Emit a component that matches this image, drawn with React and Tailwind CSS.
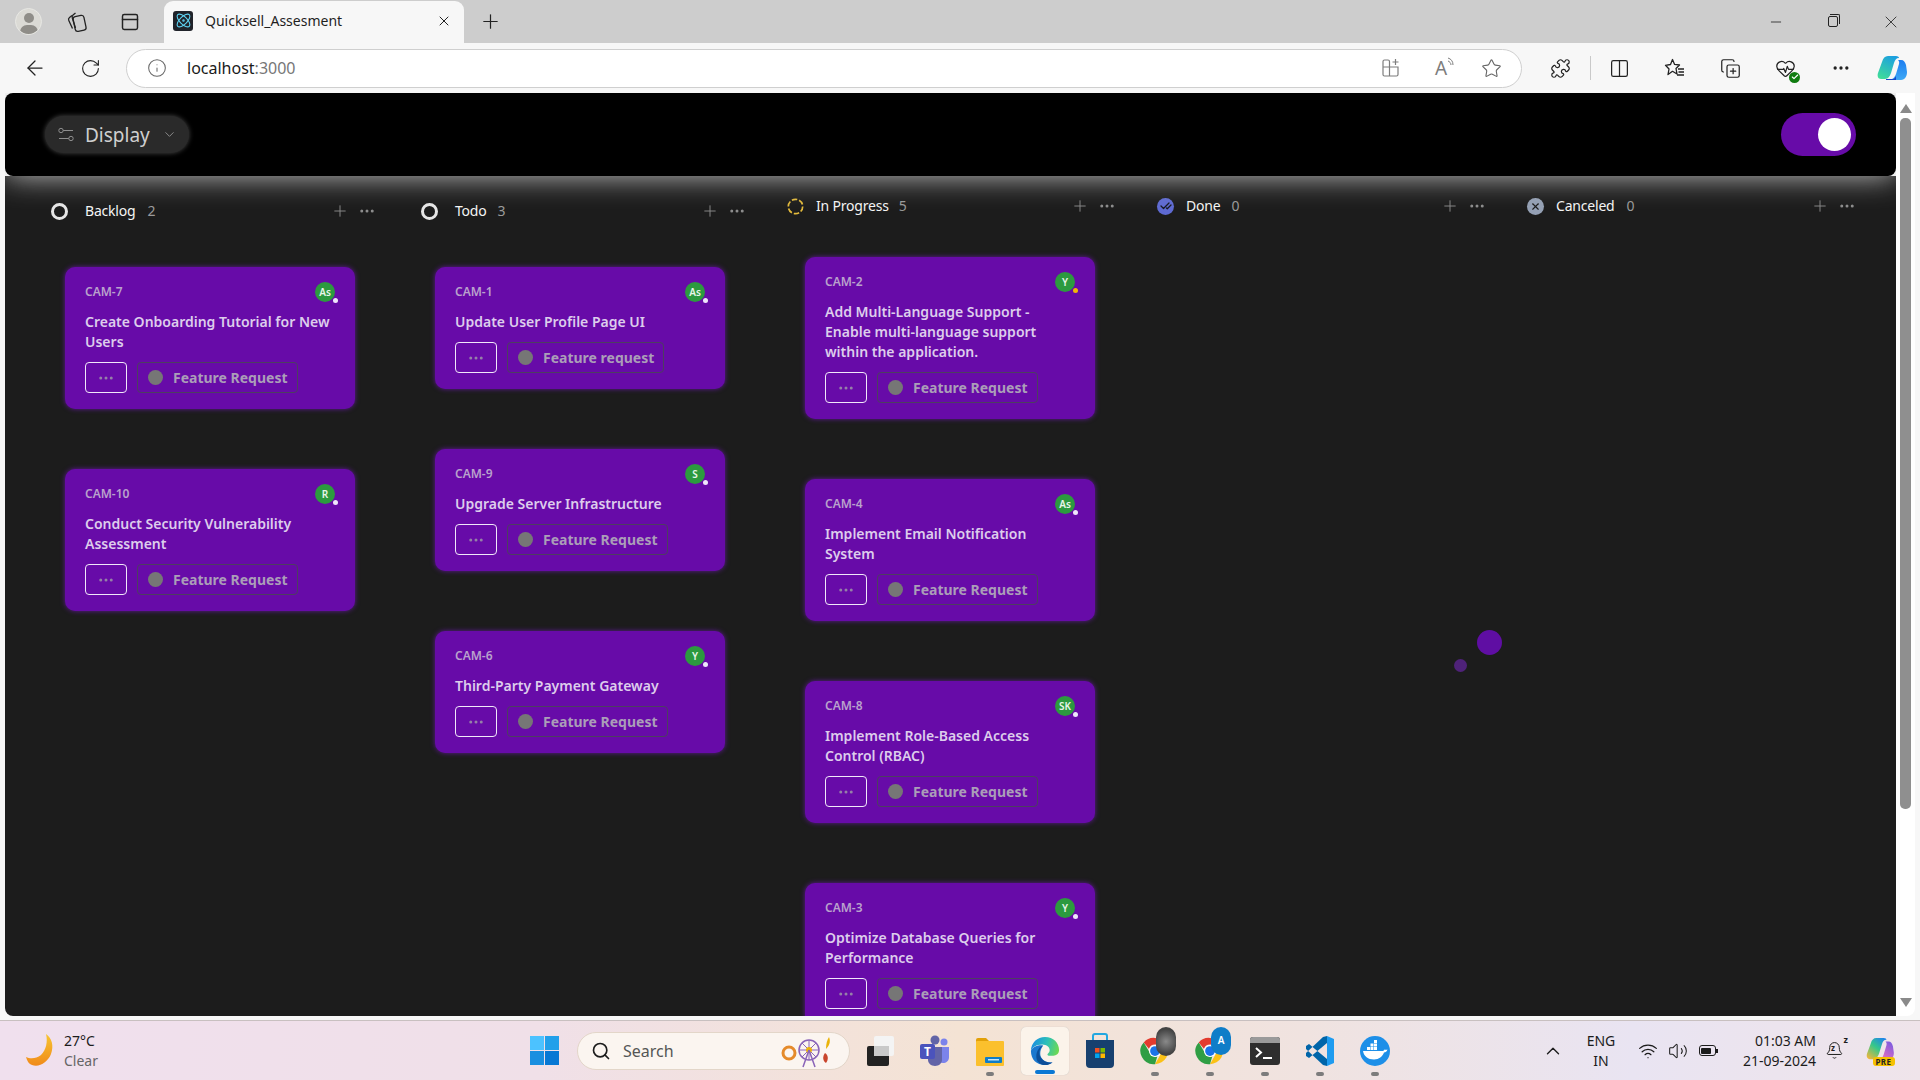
import { ArrowLeft, Atom, Bell, ChevronDown, ChevronUp, Columns2, CopyPlus, HeartPulse, Info, Minus, MoreHorizontal, PanelTop, Plus, Puzzle, RotateCw, Search, Star, Volume2, Wifi, X, Check, CheckCheck } from 'lucide-react';

const columns = [
  {
    name: 'Backlog', count: 2, icon: 'ring', header: 'pt-[25px] mb-[46px] pl-[21px]', textGap: 'ml-[17px]', countGap: 'ml-[12px]',
    cards: [
      { id: 'CAM-7', title: 'Create Onboarding Tutorial for New Users', user: 'As', tag: 'Feature Request' },
      { id: 'CAM-10', title: 'Conduct Security Vulnerability Assessment', user: 'R', tag: 'Feature Request' },
    ],
  },
  {
    name: 'Todo', count: 3, icon: 'ring', header: 'pt-[25px] mb-[46px] pl-[21px]', textGap: 'ml-[17px]', countGap: 'ml-[11px]',
    cards: [
      { id: 'CAM-1', title: 'Update User Profile Page UI', user: 'As', tag: 'Feature request' },
      { id: 'CAM-9', title: 'Upgrade Server Infrastructure', user: 'S', tag: 'Feature Request' },
      { id: 'CAM-6', title: 'Third-Party Payment Gateway', user: 'Y', tag: 'Feature Request' },
    ],
  },
  {
    name: 'In Progress', count: 5, icon: 'progress', header: 'pt-[20px] mb-[41px] pl-[17px]', textGap: 'ml-[12px]', countGap: 'ml-[10px]',
    cards: [
      { id: 'CAM-2', title: 'Add Multi-Language Support - Enable multi-language support within the application.', user: 'Y', dot: 'bg-[#f2b705]', tag: 'Feature Request' },
      { id: 'CAM-4', title: 'Implement Email Notification System', user: 'As', tag: 'Feature Request' },
      { id: 'CAM-8', title: 'Implement Role-Based Access Control (RBAC)', user: 'SK', tag: 'Feature Request' },
      { id: 'CAM-3', title: 'Optimize Database Queries for Performance', user: 'Y', tag: 'Feature Request' },
    ],
  },
  { name: 'Done', count: 0, icon: 'done', header: 'pt-[20px] mb-[41px] pl-[17px]', textGap: 'ml-[12px]', countGap: 'ml-[11px]', cards: [] },
  { name: 'Canceled', count: 0, icon: 'canceled', header: 'pt-[20px] mb-[41px] pl-[17px]', textGap: 'ml-[12px]', countGap: 'ml-[12px]', cards: [] },
];

function StatusIcon({ type }) {
  if (type === 'ring') {
    return <span className="block w-[17px] h-[17px] rounded-full border-[3px] border-[#e6e6e6]" />;
  }
  if (type === 'progress') {
    return (
      <svg width="17" height="17" viewBox="0 0 17 17" fill="none">
        <circle cx="8.5" cy="8.5" r="7.2" stroke="#e2b93b" strokeWidth="1.7" strokeDasharray="5.5 2" />
      </svg>
    );
  }
  if (type === 'done') {
    return (
      <span className="flex w-[17px] h-[17px] rounded-full bg-[#5e6ad2] items-center justify-center text-[#16181f]">
        <CheckCheck size={12} strokeWidth={2.5} />
      </span>
    );
  }
  return (
    <span className="flex w-[17px] h-[17px] rounded-full bg-[#94a0b4] items-center justify-center text-[#1c1c1c]">
      <X size={11} strokeWidth={2.5} />
    </span>
  );
}

function Card({ card }) {
  return (
    <div className="w-[290px] rounded-[10px] bg-[#670ba8] px-[20px] pt-[15px] pb-[16px] shadow-[0_0_5px_#5f1a96]">
      <div className="flex items-center justify-between h-[20px]">
        <span className="text-[12px] font-semibold text-[#b9a2cc]">{card.id}</span>
        <span className="relative flex w-[20px] h-[20px] rounded-full bg-[#2c9a3f] items-center justify-center text-[10px] font-semibold text-[#e8f5ea]">
          {card.user}
          <span className={`absolute right-[-3px] bottom-[-1px] w-[5px] h-[5px] rounded-full ${card.dot || 'bg-[#efe6fb]'}`} />
        </span>
      </div>
      <div className="mt-[10px] text-[14px] leading-[20px] font-semibold text-[#ddcdec]">{card.title}</div>
      <div className="mt-[10px] flex gap-[10px]">
        <span className="flex w-[42px] h-[31px] items-center justify-center rounded-[4px] border border-[#f1e8fa] text-[#9580a8]">
          <MoreHorizontal size={18} strokeWidth={2} />
        </span>
        <span className="flex h-[31px] items-center rounded-[4px] border border-[#4d3f60] pl-[10px] pr-[9px] text-[14px] font-bold text-[#ab9eb8]">
          <span className="w-[15px] h-[15px] rounded-full bg-[#767676] mr-[10px]" />
          {card.tag}
        </span>
      </div>
    </div>
  );
}

function Column({ col }) {
  return (
    <div className="w-[370px] shrink-0">
      <div className={`flex items-center pr-[24px] ${col.header}`}>
        <StatusIcon type={col.icon} />
        <span className={`${col.textGap} text-[14px] leading-[20px] tracking-[-0.2px] text-[#f4f4f4]`}>{col.name}</span>
        <span className={`${col.countGap} text-[14px] leading-[20px] text-[#9a9a9a]`}>{col.count}</span>
        <span className="ml-auto flex items-center gap-[9px] text-[#8c8c8c]">
          <Plus size={18} strokeWidth={1.25} />
          <MoreHorizontal size={18} strokeWidth={2} />
        </span>
      </div>
      <div className="flex flex-col gap-[60px] pl-[35px]">
        {col.cards.map((card) => (
          <Card key={card.id} card={card} />
        ))}
      </div>
    </div>
  );
}

function WorkspacesIcon() {
  return (
    <svg width="24" height="24" viewBox="0 0 24 24" fill="none" stroke="#222" strokeWidth="1.3">
      <rect x="9" y="6" width="11" height="15" rx="2.5" transform="rotate(-12 14 13)" />
      <path d="M7 5.500 4.500 7.500c-1 .8-1.200 2-.7 3l3.700 8" />
      <path d="M10.500 3 8 5c-1 .8-1.100 1.900-.7 3l3.200 10" />
    </svg>
  );
}

function AppAddIcon() {
  return (
    <svg width="20" height="20" viewBox="0 0 20 20" fill="none" stroke="#7d7d7d" strokeWidth="1.2">
      <path d="M2 9V3.500A1.500 1.500 0 0 1 3.500 2H7a1.500 1.500 0 0 1 1.500 1.500V18H3.500A1.500 1.500 0 0 1 2 16.500V9h15v7.500a1.500 1.500 0 0 1-1.500 1.500H8.500" />
      <path d="M14.500 1v6M11.500 4h6" />
    </svg>
  );
}

function ReadAloudIcon() {
  return (
    <span className="relative flex items-center text-[19px] leading-none text-[#7d7d7d]">
      A
      <svg className="absolute left-[12px] top-[-2px]" width="10" height="12" viewBox="0 0 10 12" fill="none" stroke="#7d7d7d" strokeWidth="1">
        <path d="M1 1c3 1 5 3 5 7M1 4c1.500.5 3 2 3 4" />
      </svg>
    </span>
  );
}

function FavoritesIcon() {
  return (
    <svg width="22" height="22" viewBox="0 0 22 22" fill="none" stroke="#222" strokeWidth="1.3" strokeLinejoin="round">
      <path d="M8.500 2.500 10.600 7.400 15.500 8 12 11.500 13 17 8.500 14.300 4 17.500 5 12 1.500 8.300 6.500 7.500z" />
      <path d="M14 12h6M14.500 15h5.500M13 18h7" />
    </svg>
  );
}

function ToolbarCopilot() {
  return (
    <svg width="30" height="26" viewBox="0 0 30 26">
      <defs>
        <linearGradient id="cpa" x1="0.7" y1="0" x2="0.2" y2="1">
          <stop offset="0" stopColor="#1c9fe0" />
          <stop offset="1" stopColor="#3fdc9a" />
        </linearGradient>
        <linearGradient id="cpb" x1="0.5" y1="0" x2="0.5" y2="1">
          <stop offset="0" stopColor="#1c7df0" />
          <stop offset="1" stopColor="#3ea8f5" />
        </linearGradient>
      </defs>
      <path d="M11 1h8c2 0 3 1 3 2-3 0-4 2-5 5l-3 10c-1 3-3 6-6 6H4c-3 0-4-3-3-6L5 7c1-4 3-6 6-6z" fill="url(#cpa)" />
      <path d="M21 5h3c3 0 4 2 5 5l1 7c0 4-2 8-6 8H13c3-1 5-3 6-6l3-10c.5-2 0-3-1-4z" fill="url(#cpb)" />
      <path d="M9 24h7c1 0 2-1 3-3v4H9z" fill="#1746c7" />
    </svg>
  );
}

function TrayCopilot() {
  return (
    <span className="relative flex w-[29px] h-[28px]">
      <svg width="28" height="24" viewBox="0 0 30 26">
        <defs>
          <linearGradient id="tca" x1="0.8" y1="0" x2="0.1" y2="1">
            <stop offset="0" stopColor="#1f86e8" />
            <stop offset="0.45" stopColor="#35c88a" />
            <stop offset="1" stopColor="#f4b63a" />
          </linearGradient>
          <linearGradient id="tcb" x1="0.8" y1="0" x2="0.2" y2="1">
            <stop offset="0" stopColor="#7a5be0" />
            <stop offset="1" stopColor="#f070c0" />
          </linearGradient>
        </defs>
        <path d="M11 1h8c2 0 3 1 3 2-3 0-4 2-5 5l-3 10c-1 3-3 6-6 6H4c-3 0-4-3-3-6L5 7c1-4 3-6 6-6z" fill="url(#tca)" />
        <path d="M21 5h3c3 0 4 2 5 5l1 7c0 4-2 8-6 8H13c3-1 5-3 6-6l3-10c.5-2 0-3-1-4z" fill="url(#tcb)" />
      </svg>
      <span className="absolute left-[7px] bottom-[-1px] w-[22px] h-[9px] rounded-[3px] bg-[#f6c100] text-[8px] leading-[9px] font-bold tracking-[0.5px] text-center text-[#222]">PRE</span>
    </span>
  );
}

function ChromeIcon() {
  return (
    <svg width="30" height="30" viewBox="0 0 32 32">
      <path d="M16 2a14 14 0 0 1 12.100 7H16a7 7 0 0 0-6.500 4.500L4 6.800A14 14 0 0 1 16 2z" fill="#e33b2e" />
      <path d="M28.100 9A14 14 0 0 1 16 30l6-10.500A7 7 0 0 0 21.500 12z" fill="#fbc116" />
      <path d="M16 30A14 14 0 0 1 4 6.800L10 17a7 7 0 0 0 8.500 4.500L16 30z" fill="#2f9e44" />
      <circle cx="16" cy="16" r="6.500" fill="#fff" />
      <circle cx="16" cy="16" r="5.200" fill="#1a73e8" />
    </svg>
  );
}

const taskIcons = [
  {
    key: 'task',
    icon: (
      <svg width="30" height="32" viewBox="0 0 30 32">
        <rect x="2" y="11" width="22" height="20" rx="2" fill="#222" />
        <rect x="9" y="1" width="20" height="20" rx="2" fill="#f4f4f4" />
        <rect x="9" y="11" width="15" height="10" fill="#c9c9c9" />
      </svg>
    ),
  },
  {
    key: 'teams',
    icon: (
      <svg width="32" height="32" viewBox="0 0 32 32">
        <circle cx="25" cy="7" r="3.500" fill="#7b83eb" />
        <circle cx="16" cy="5" r="4.500" fill="#6264a7" />
        <path d="M20 12h10v10c0 4-3 6-6 6s-4-2-4-4z" fill="#7b83eb" />
        <path d="M9 12h14v13c0 3-3 6-7 6s-7-3-7-6z" fill="#6264a7" />
        <rect x="1" y="9" width="15" height="15" rx="2" fill="#4b53bc" />
        <text x="8.500" y="21" fontSize="12" fontWeight="700" textAnchor="middle" fill="#fff">T</text>
      </svg>
    ),
  },
  {
    key: 'files',
    dot: true,
    icon: (
      <svg width="30" height="30" viewBox="0 0 30 30">
        <path d="M1 4a2 2 0 0 1 2-2h8l3 3h0v4H1z" fill="#e2a008" />
        <rect x="1" y="5" width="28" height="25" rx="1" fill="#fbc02d" />
        <rect x="10" y="21" width="17" height="6" rx="1" fill="#0f7dc8" />
        <rect x="13" y="23" width="11" height="1.500" fill="#c7e6fa" />
      </svg>
    ),
  },
  {
    key: 'edge',
    active: true,
    icon: (
      <svg width="30" height="30" viewBox="0 0 32 32">
        <defs>
          <linearGradient id="ega" x1="0" y1="0.5" x2="1" y2="0.7">
            <stop offset="0" stopColor="#1b8fe0" />
            <stop offset="0.5" stopColor="#2cc0b8" />
            <stop offset="1" stopColor="#70da4e" />
          </linearGradient>
        </defs>
        <path d="M1 16C1 7 8 1 16 1c9 0 15 6 15 14 0 4-3 6-6 6h-5c-1 0-2-1-1-2 1-1 2-2 2-4 0-3-3-6-8-6C7 9 2 12 1 16z" fill="url(#ega)" />
        <path d="M1 16c0 9 6 15 15 15 3 0 6-1 8-3-5 1-10-1-12-5-2-4-1-9 2-13C8 9 2 12 1 16z" fill="#1b78cf" />
        <path d="M14 10c-4 3-5 8-3 12 2 4 7 7 13 6-2 2-5 3-8 3-3 0-5-1-7-3-3-3-3-10 0-14 1-2 3-3 5-4z" fill="#0d4f9a" />
      </svg>
    ),
  },
  {
    key: 'store',
    icon: (
      <svg width="30" height="38" viewBox="0 0 30 38">
        <path d="M8 9V4a2 2 0 0 1 2-2h10a2 2 0 0 1 2 2v5" fill="none" stroke="#22a7e0" strokeWidth="2" />
        <path d="M1 8h28v24a4 4 0 0 1-4 4H5a4 4 0 0 1-4-4z" fill="#17406f" />
        <rect x="10" y="16" width="4.500" height="4.500" fill="#f25022" />
        <rect x="15.500" y="16" width="4.500" height="4.500" fill="#7fba00" />
        <rect x="10" y="21.500" width="4.500" height="4.500" fill="#00a4ef" />
        <rect x="15.500" y="21.500" width="4.500" height="4.500" fill="#ffb900" />
      </svg>
    ),
  },
  {
    key: 'chrome1',
    dot: true,
    icon: (
      <span className="relative flex">
        <ChromeIcon />
        <span className="absolute left-[16px] top-[-9px] w-[20px] h-[29px] rounded-full bg-[radial-gradient(circle,#8a8a8a,#444_70%)]" />
      </span>
    ),
  },
  {
    key: 'chrome2',
    dot: true,
    icon: (
      <span className="relative flex">
        <ChromeIcon />
        <span className="absolute left-[16px] top-[-9px] w-[20px] h-[28px] rounded-full bg-[#0f7dc8] text-[10px] font-semibold text-white flex items-center justify-center">A</span>
      </span>
    ),
  },
  {
    key: 'terminal',
    dot: true,
    icon: (
      <svg width="30" height="30" viewBox="0 0 30 30">
        <rect x="0" y="1" width="30" height="28" rx="3" fill="#2e2e2e" />
        <path d="M3 1h24a3 3 0 0 1 3 3v3H0V4a3 3 0 0 1 3-3z" fill="#9a9a9a" />
        <path d="M6 12l5 4.500-5 4.500" fill="none" stroke="#fff" strokeWidth="2" />
        <rect x="13" y="21" width="9" height="2" fill="#fff" />
      </svg>
    ),
  },
  {
    key: 'vscode',
    dot: true,
    icon: (
      <svg width="30" height="32" viewBox="0 0 30 32">
        <path d="M22 1l7 3v24l-7 3z" fill="#1f9cf0" />
        <path d="M1 11l3-2 18 15v7l-4-1L1 14zM1 21l3 2 18-15V1l-4 1L1 18z" fill="#0065a9" />
      </svg>
    ),
  },
  {
    key: 'docker',
    dot: true,
    icon: (
      <svg width="32" height="32" viewBox="0 0 32 32">
        <circle cx="16" cy="16" r="15" fill="#1d8fe8" />
        <g fill="#fff">
          <rect x="8" y="12" width="3" height="3" />
          <rect x="11.500" y="12" width="3" height="3" />
          <rect x="15" y="12" width="3" height="3" />
          <rect x="11.500" y="8.500" width="3" height="3" />
          <rect x="15" y="8.500" width="3" height="3" />
          <rect x="15" y="5" width="3" height="3" />
          <path d="M4 16h19c1 0 2-.5 2.500-1.500.8.400 2 .400 3 0-.5 2-2 3-3.500 3-1.500 4-5 7-10 7-6 0-10-3-11-8.500z" />
        </g>
      </svg>
    ),
  },
];

function App() {
  return (
    <div className="w-[1920px] h-[1080px] overflow-hidden flex flex-col bg-[#f7f7f7] font-['Noto_Sans',sans-serif] relative">
      {/* tab strip */}
      <div className="h-[43px] shrink-0 bg-[#cdcdcd] flex items-end text-[#222]">
        <div className="w-[56px] h-[43px] flex items-center justify-center">
          <span className="relative w-[27px] h-[27px] rounded-full bg-[#dbdad5] overflow-hidden border border-[#e8e8e4]">
            <span className="absolute left-[8px] top-[4px] w-[10px] h-[10px] rounded-full bg-[#8f8d88]" />
            <span className="absolute left-[4px] top-[16px] w-[18px] h-[14px] rounded-full bg-[#8f8d88]" />
          </span>
        </div>
        <div className="w-[42px] h-[43px] flex items-center justify-center"><WorkspacesIcon /></div>
        <div className="w-[64px] h-[43px] flex items-center justify-center"><PanelTop size={20} strokeWidth={1.75} /></div>
        <div className="ml-[2px] w-[300px] h-[42px] rounded-t-[9px] bg-[#f7f7f7] flex items-center pl-[9px] pr-[12px] pb-[3px]">
          <span className="w-[20px] h-[20px] rounded-[3px] bg-[#20232a] flex items-center justify-center text-[#5ed3f3]"><Atom size={17} strokeWidth={1.5} /></span>
          <span className="ml-[12px] flex-1 text-[14px] text-[#1f1f1f]">Quicksell_Assesment</span>
          <X size={16} strokeWidth={1.5} />
        </div>
        <div className="w-[52px] h-[43px] flex items-center justify-center"><Plus size={23} strokeWidth={1.25} /></div>
        <div className="ml-auto flex h-[43px]">
          <div className="w-[56px] flex items-center justify-center"><Minus size={16} strokeWidth={1.25} /></div>
          <div className="w-[58px] flex items-center justify-center">
            <span className="relative w-[10px] h-[11px] border border-[#222] rounded-[2px] before:absolute before:left-[1px] before:top-[-3px] before:w-[10px] before:h-[10px] before:border-t before:border-r before:border-[#222] before:rounded-tr-[2px]" />
          </div>
          <div className="w-[58px] flex items-center justify-center"><X size={20} strokeWidth={1} /></div>
        </div>
      </div>

      {/* toolbar */}
      <div className="h-[50px] shrink-0 flex items-center text-[#222]">
        <div className="ml-[7px] w-[56px] flex justify-center"><ArrowLeft size={24} strokeWidth={1.25} /></div>
        <div className="w-[54px] flex justify-center"><RotateCw size={21} strokeWidth={1.25} /></div>
        <div className="ml-[9px] w-[1396px] h-[39px] rounded-full bg-white border border-[#cfcfcf] flex items-center pl-[13px] pr-[5px]">
          <span className="w-[34px] flex justify-center text-[#666]"><Info size={20} strokeWidth={1.25} /></span>
          <span className="ml-[13px] text-[16px] text-[#1a1a1a]">localhost<span className="text-[#777]">:3000</span></span>
          <span className="ml-auto w-[50px] flex justify-center"><AppAddIcon /></span>
          <span className="w-[50px] flex justify-center"><ReadAloudIcon /></span>
          <span className="w-[50px] flex justify-center text-[#666]"><Star size={21} strokeWidth={1.25} /></span>
        </div>
        <div className="ml-[10px] w-[56px] flex justify-center"><Puzzle size={21} strokeWidth={1.4} /></div>
        <span className="ml-[2px] w-[1px] h-[24px] bg-[#c9c9c9]" />
        <div className="w-[56px] flex justify-center"><Columns2 size={21} strokeWidth={1.4} /></div>
        <div className="w-[55.5px] flex justify-center"><FavoritesIcon /></div>
        <div className="w-[55.5px] flex justify-center"><CopyPlus size={21} strokeWidth={1.4} /></div>
        <div className="w-[55.5px] flex justify-center">
          <span className="relative flex">
            <HeartPulse size={21} strokeWidth={1.4} />
            <span className="absolute right-[-4px] bottom-[-4px] w-[11px] h-[11px] rounded-full bg-[#107c10] flex items-center justify-center text-white"><Check size={8} strokeWidth={3.5} /></span>
          </span>
        </div>
        <div className="w-[55.5px] flex justify-center"><MoreHorizontal size={20} strokeWidth={2} /></div>
        <div className="w-[46px] flex justify-center"><ToolbarCopilot /></div>
      </div>

      {/* page */}
      <div className="h-[923px] shrink-0 ml-[5px] w-[1910px] rounded-b-[8px] bg-white flex overflow-hidden">
        <div className="w-[1891px] shrink-0 flex flex-col relative overflow-hidden">
          <div className="relative z-10 h-[83px] shrink-0 bg-black rounded-[8px] flex items-center justify-between pl-[40px] pr-[40px] shadow-[0_0_30px_#c4c4c4]">
            <button className="flex w-[144px] h-[37px] items-center rounded-full bg-[#2a2a2a] shadow-[0_0_5px_#4a4a4a] pl-[13px] text-[#cfcfcf]">
              <svg width="16" height="16" viewBox="0 0 16 16" fill="none" stroke="#8e8e8e" strokeWidth="1">
                <circle cx="3" cy="3.500" r="2.200" />
                <path d="M5.200 3.500H15M1 11.500h9.800" />
                <circle cx="13" cy="11.500" r="2.200" />
              </svg>
              <span className="ml-[11px] mt-[1px] text-[19px] leading-[24px]">Display</span>
              <ChevronDown size={15} strokeWidth={1.5} className="ml-[12px] text-[#8e8e8e]" />
            </button>
            <span className="relative block w-[75px] h-[43px] rounded-full bg-[#670ba8]">
              <span className="absolute right-[5px] top-[5px] w-[33px] h-[33px] rounded-full bg-white" />
            </span>
          </div>
          <div className="flex-1 bg-[#1c1c1c] flex pl-[25px] overflow-hidden">
            {columns.map((col) => (
              <Column key={col.name} col={col} />
            ))}
          </div>
          {/* background bubbles */}
          <span className="absolute left-[1472px] top-[537px] w-[25px] h-[25px] rounded-full bg-[#5f0ea3]" />
          <span className="absolute left-[1449px] top-[566px] w-[13px] h-[13px] rounded-full bg-[#4f2279]" />
        </div>
        <div className="w-[19px] shrink-0 flex flex-col items-center pt-[11px] pb-[9px]">
          <span className="w-0 h-0 border-x-[6px] border-x-transparent border-b-[9px] border-b-[#8a8a8a]" />
          <span className="mt-[5px] w-[11px] h-[691px] rounded-[5px] bg-[#8f8f8f]" />
          <span className="mt-auto w-0 h-0 border-x-[6px] border-x-transparent border-t-[9px] border-t-[#8a8a8a]" />
        </div>
      </div>

      {/* taskbar */}
      <div className="mt-[4px] h-[60px] shrink-0 border-t border-[#c8c0c0] bg-[linear-gradient(90deg,#f0e0ee_0%,#f0e0e8_28%,#f4e3d4_50%,#f0e3e0_68%,#e9e4f2_85%,#efe4ea_100%)] flex items-center text-[#1c1c1c]">
        <div className="w-[522px] flex items-center">
          <svg className="ml-[26px]" width="28" height="34" viewBox="0 0 28 34">
            <defs>
              <linearGradient id="moon" x1="0.5" y1="0" x2="0.5" y2="1">
                <stop offset="0" stopColor="#f7c531" />
                <stop offset="1" stopColor="#f08a1a" />
              </linearGradient>
            </defs>
            <path d="M20 0c6 4 8 12 5 20-3 8-12 14-19 11-3-1-5-4-6-8 4 2 10 2 15-2 5-5 7-13 5-21z" fill="url(#moon)" />
          </svg>
          <div className="ml-[10px] text-[14px] leading-[20px]">
            <div>27°C</div>
            <div className="text-[#666]">Clear</div>
          </div>
        </div>
        <div className="w-[45px] flex justify-center">
          <span className="grid grid-cols-2 gap-[1.5px] w-[29px] h-[29px]">
            <span className="bg-[#4cc2ff]" />
            <span className="bg-[#22a0ea]" />
            <span className="bg-[#1a8fe0]" />
            <span className="bg-[#0878d4]" />
          </span>
        </div>
        <div className="ml-[10px] mr-[2.5px] w-[273px] h-[38px] rounded-full bg-[#fbf5f0] border border-[#e3d6c9] flex items-center pl-[13px] pr-[8px]">
          <Search size={20} strokeWidth={2} />
          <span className="ml-[12px] text-[16px] text-[#555]">Search</span>
          <svg className="ml-auto" width="62" height="36" viewBox="0 0 62 36" fill="none">
            <circle cx="10" cy="20" r="6" stroke="#e58a2a" strokeWidth="3" />
            <circle cx="30" cy="17" r="10" stroke="#8a64b8" strokeWidth="1.5" />
            <path d="M30 7v20M20 17h20M23 10l14 14M37 10 23 24" stroke="#8a64b8" strokeWidth="1" />
            <circle cx="30" cy="17" r="3" fill="#eab308" />
            <path d="M30 17l-6 17M30 17l6 17" stroke="#8a64b8" strokeWidth="1.5" />
            <path d="M50 4c2 5 0 9-3 12 0-5 1-9 3-12z" fill="#eab308" />
            <path d="M46 20c3 2 4 6 1 10-3-2-4-6-1-10z" fill="#c9452c" />
          </svg>
        </div>
        {taskIcons.map((item) => (
          <div key={item.key} className="relative w-[55px] h-[48px] flex items-center justify-center">
            {item.active && <span className="absolute left-[3px] top-0 w-[48px] h-[48px] rounded-[5px] bg-[#fbf3ea] shadow-[0_0_1px_#bbb]" />}
            <span className="relative flex">{item.icon}</span>
            {item.dot && <span className="absolute bottom-[-1px] left-[23px] w-[8px] h-[4px] rounded-full bg-[#7c7c7c]" />}
            {item.active && <span className="absolute bottom-[1px] left-[17px] w-[20px] h-[4px] rounded-full bg-[#0a78d4]" />}
          </div>
        ))}
        <div className="ml-auto flex items-center">
          <div className="w-[36px] flex justify-center"><ChevronUp size={22} strokeWidth={1.5} /></div>
          <div className="w-[60px] text-center text-[14px] leading-[20px]">ENG<br />IN</div>
          <div className="ml-[2px] w-[30px] flex justify-center"><Wifi size={20} strokeWidth={1.5} /></div>
          <div className="w-[30px] flex justify-center"><Volume2 size={20} strokeWidth={1.25} /></div>
          <div className="w-[30px] flex justify-center">
            <span className="flex items-center">
              <span className="flex w-[17px] h-[11px] border border-[#1c1c1c] rounded-[3px] p-[1.5px]"><span className="w-[10px] bg-[#1c1c1c] rounded-[1px]" /></span>
              <span className="w-[2px] h-[4px] bg-[#1c1c1c]" />
            </span>
          </div>
          <div className="w-[93px] text-right text-[14px] leading-[20px]">01:03 AM<br />21-09-2024</div>
          <div className="w-[40px] flex justify-center pr-[3px]">
            <span className="relative flex">
              <Bell size={19} strokeWidth={1.25} />
              <span className="absolute left-[6px] top-[2px] text-[8px] leading-[10px] font-bold">z</span>
              <span className="absolute right-[-4px] top-[-6px] text-[9px] leading-[10px] font-bold">z</span>
            </span>
          </div>
          <div className="ml-[4px] w-[40px] flex justify-center"><TrayCopilot /></div>
          <div className="w-[20px]" />
        </div>
      </div>
    </div>
  );
}

export default App;
